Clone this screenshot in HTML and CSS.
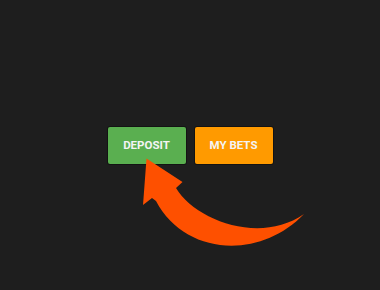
FILE: index.html
```html
<!DOCTYPE html>
<html>
<head>
<meta charset="utf-8">
<link rel="stylesheet" href="styles.css">
</head>
<body>
<div class="stage">
  <div class="actions">
    <button class="btn btn-deposit">DEPOSIT</button>
    <button class="btn btn-bets">MY BETS</button>
  </div>
  <svg class="arrow" width="380" height="290" viewBox="0 0 380 290">
    <path d="M146.5,158.5 L182.5,182 L176,188 C195,220 260,245 304,214 C260,260 185,256 156,201 L152,198 L143,205 Z" fill="#fe5000"/>
  </svg>
</div>
</body>
</html>
```

FILE: styles.css
```css
html, body {
  margin: 0;
  padding: 0;
  background: #1e1e1e;
}
.stage {
  position: relative;
  width: 380px;
  height: 290px;
  display: flex;
  align-items: center;
  justify-content: center;
}
.actions {
  display: flex;
  gap: 9px;
}
.btn {
  width: 78px;
  height: 37px;
  border: none;
  border-radius: 2px;
  color: #f4f4f4;
  font-family: Roboto, "Liberation Sans", sans-serif;
  font-weight: 700;
  font-size: 11.5px;
  padding: 0;
  box-shadow: 0 0 0 1px rgba(0,0,0,0.35);
}
.btn-deposit {
  background: #5aaf50;
}
.btn-bets {
  background: #ff9a00;
}
.arrow {
  position: absolute;
  left: 0;
  top: 0;
}
```
